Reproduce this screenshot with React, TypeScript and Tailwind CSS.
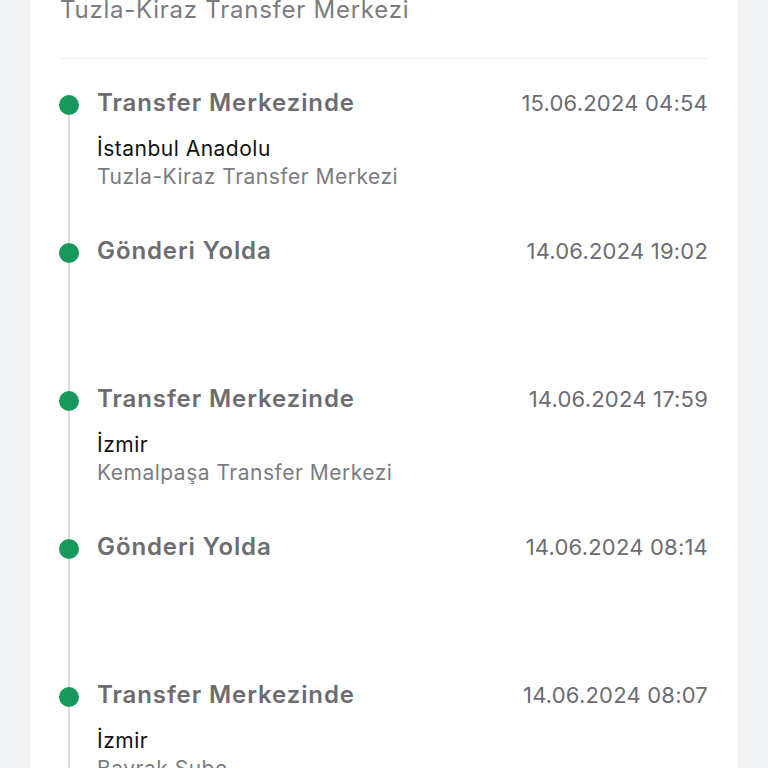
import React from "react";

type Step = {
  title: string;
  date: string;
  city?: string;
  place?: string;
};

const STEPS: Step[] = [
  { title: "Transfer Merkezinde", date: "15.06.2024 04:54", city: "İstanbul Anadolu", place: "Tuzla-Kiraz Transfer Merkezi" },
  { title: "Gönderi Yolda", date: "14.06.2024 19:02" },
  { title: "Transfer Merkezinde", date: "14.06.2024 17:59", city: "İzmir", place: "Kemalpaşa Transfer Merkezi" },
  { title: "Gönderi Yolda", date: "14.06.2024 08:14" },
  { title: "Transfer Merkezinde", date: "14.06.2024 08:07", city: "İzmir", place: "Bayrak Şube" },
];

function TimelineItem({ step, first }: { step: Step; first: boolean }) {
  return (
    <div className="flex h-[148px]">
      {/* dot + line */}
      <div className="flex w-5 shrink-0 flex-col items-center">
        <div className={`h-[7px] w-[2px] ${first ? "bg-transparent" : "bg-[#dcdcde]"}`} />
        <div className="h-5 w-5 rounded-full bg-[#16995a]" />
        <div className="w-[2px] flex-1 bg-[#dcdcde]" />
      </div>
      <div className="ml-[18px] flex-1">
        <div className="flex items-center justify-between">
          <span className="text-[24px] leading-[30px] font-semibold tracking-[0.9px] text-[#6c6c71]">{step.title}</span>
          <span className="text-[22px] leading-[30px] tracking-[0.2px] text-[#6c6c71]">{step.date}</span>
        </div>
        {step.city && (
          <div className="mt-[17px]">
            <div className="text-[21px] leading-[28px] tracking-[0.5px] text-[#111111]">{step.city}</div>
            <div className="text-[21px] leading-[28px] tracking-[0.5px] text-[#7c7c80]">{step.place}</div>
          </div>
        )}
      </div>
    </div>
  );
}

export default function App() {
  return (
    <div
      className="h-[768px] overflow-hidden bg-[#f2f3f5] px-[30px]"
      style={{ fontFamily: "Inter, 'Noto Sans', sans-serif" }}
    >
      <div className="-mt-[4px] bg-white px-[30px] shadow-[0_0_2px_rgba(0,0,0,0.04)]">
        <div className="pb-[35px] text-[24px] leading-[27px] tracking-[0.75px] text-[#7c7c80]">Tuzla-Kiraz Transfer Merkezi</div>
        <div className="h-px bg-[#f0f0f2]" />
        <div className="-ml-px pt-[29px]">
          {STEPS.map((s, i) => (
            <TimelineItem key={i} step={s} first={i === 0} />
          ))}
        </div>
      </div>
    </div>
  );
}
